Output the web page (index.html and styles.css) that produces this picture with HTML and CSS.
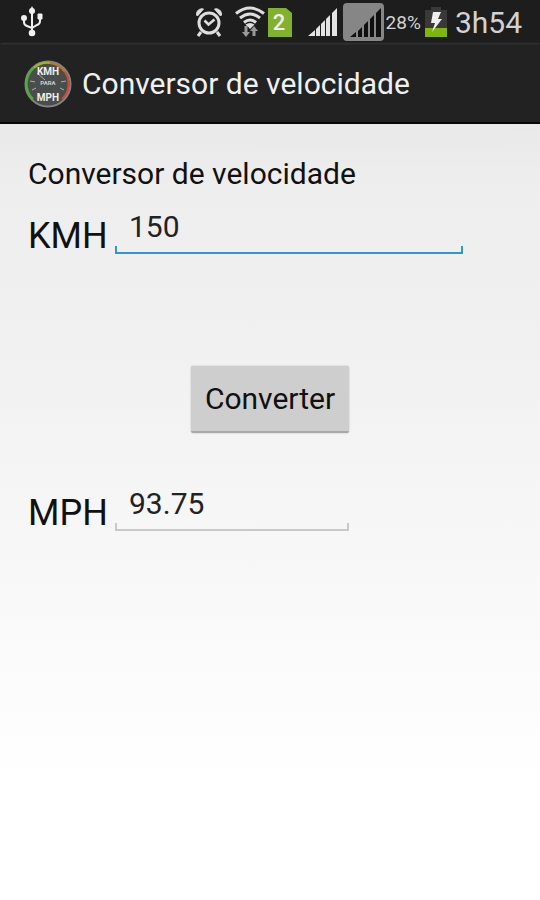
FILE: index.html
```html
<!DOCTYPE html>
<html lang="pt">
<head>
  <meta charset="UTF-8">
  <meta name="viewport" content="width=device-width, initial-scale=1.0">
  <title>Conversor de velocidade</title>
  <link rel="stylesheet" href="styles.css">
</head>
<body>
  <div class="status-bar">
    <svg class="usb" width="24" height="32" viewBox="0 0 24 32" fill="none" stroke="#f0f0f0" stroke-width="2">
      <path d="M12 5v22M4 11v5q0 3 3 4l5 2M20 10v5q0 3-3 4l-5 3"/>
      <path d="M12 0l3 6H9z" fill="#f0f0f0" stroke="none"/>
      <circle cx="12" cy="5" r="2" fill="#f0f0f0"/>
      <circle cx="4" cy="12" r="2" fill="#f0f0f0"/>
      <path d="M18 8h4v5h-4z" fill="#f0f0f0" stroke-width="1"/>
      <circle cx="12" cy="27" r="2.3" fill="#f0f0f0"/>
    </svg>
    <div class="status-icons">
      <svg width="30" height="30" viewBox="0 0 30 30" fill="none" stroke="#dedede">
        <circle cx="15" cy="16" r="10" stroke-width="3"/>
        <path d="M10.500 13.500l4 4 6-5" stroke-width="2.500"/>
        <path d="M2.500 8a5.500 5.500 0 0 1 7-6L3.500 9zM27.500 8a5.500 5.500 0 0 0-7-6l6 7z" fill="#dedede" stroke-width="1"/>
        <path d="M7 25l-3 4M23 25l3 4" stroke-width="3"/>
      </svg>
      <svg class="wifi" width="32" height="32" viewBox="0 0 32 32" fill="none" stroke="#dedede" stroke-width="3">
        <path d="M2 7.500q14-11 28 0M6 12q10-8 20 0M10 16.500q6-5 12 0"/>
        <path d="M11.500 18.500q4.500-3 9 0L16 23z" fill="#dedede" stroke="none"/>
        <path d="M12 21v7M20 31v-9" stroke="#1d1d1d" stroke-width="5"/>
        <path d="M12 20v7M20 30v-6" stroke="#999" stroke-width="3"/>
        <path d="M8 26h8l-4 5zM16 25h8l-4-5z" fill="#999" stroke="none"/>
      </svg>
      <svg width="24" height="29" viewBox="0 0 24 29">
        <path d="M0 0h18l6 5v24H0z" fill="#81b22f"/>
        <text class="sim-text" x="11" y="22" text-anchor="middle">2</text>
      </svg>
      <svg class="signal" width="30" height="28" viewBox="0 0 30 28" fill="#e4e4e4">
        <path d="M0 28l7-6v6zM8 21l4-4v11H8zM13 16l4-4v16h-4zM18 11l4-4v21h-4zM24 5l5-5v28h-5z"/>
      </svg>
      <svg class="signal-off" width="41" height="38" viewBox="0 0 41 38">
        <rect width="41" height="38" rx="4" fill="#868686"/>
        <path d="M7 34l6-5v5zM15 28l4-4v10h-4zM21 22l4-4v16h-4zM27 16l4-4v22h-4zM33 10l5-5v29h-5z" fill="#101010"/>
      </svg>
      <span class="battery-level">28%</span>
      <svg class="battery" width="22" height="30" viewBox="0 0 22 30">
        <path d="M6 0h10v3h6v27H0V3h6z" fill="#393939"/>
        <path d="M0 21h22v9H0z" fill="#80b50d"/>
        <path d="M8 5h8l-3 7h4L7 25l3-9H6z" fill="#eee"/>
      </svg>
      <span class="clock">3h54</span>
    </div>
  </div>

  <header class="action-bar">
    <svg width="48" height="50" viewBox="0 0 48 50">
      <circle cx="24" cy="25" r="22.500" fill="#4b4d4c" stroke="#858585" stroke-width="2"/>
      <g fill="none" stroke-width="2">
        <path d="M9 40A21 21 0 0 1 10 9" stroke="#41b52e"/>
        <path d="M10 9A21 21 0 0 1 26 4" stroke="#a3b51f"/>
        <path d="M26 4A21 21 0 0 1 41 13" stroke="#b8792b"/>
        <path d="M41 13A21 21 0 0 1 38 40" stroke="#d04a38"/>
      </g>
      <path d="M6 22l5 1M42 22l-5 1M8 31l4-2M40 31l-4-2M13 14l8 7" stroke="#aaa"/>
      <text class="gauge-text" x="24" y="16" text-anchor="middle">KMH</text>
      <text class="gauge-small" x="24" y="26" text-anchor="middle">PARA</text>
      <text class="gauge-text" x="24" y="42" text-anchor="middle">MPH</text>
    </svg>
    <h1>Conversor de velocidade</h1>
  </header>

  <form class="converter" id="converter">
    <p class="heading">Conversor de velocidade</p>
    <div class="field">
      <label for="kmh">KMH</label>
      <input class="active" type="text" inputmode="decimal" id="kmh" value="150">
    </div>
    <button type="submit">Converter</button>
    <div class="field">
      <label for="mph">MPH</label>
      <input class="result" type="text" id="mph" value="93.75" readonly>
    </div>
  </form>

  <script>
    document.getElementById('converter').addEventListener('submit', function(e) {
      e.preventDefault();
      const kmh = parseFloat(e.target.kmh.value);
      e.target.mph.value = isNaN(kmh) ? '' : kmh / 1.6;
    });
  </script>
</body>
</html>
```
FILE: styles.css
```css
* {
  box-sizing: border-box;
}
body {
  display: flex;
  flex-direction: column;
  min-height: 100vh;
  margin: 0;
  font-family: Roboto, sans-serif;
  font-size: 30px;
  color: #111;
  background-color: #fff;
}
.status-bar {
  display: flex;
  align-items: center;
  justify-content: space-between;
  height: 44px;
  padding: 0 18px 0 20px;
  background-color: #1d1d1d;
  color: #d2d2d2;
}
.status-icons {
  display: flex;
  align-items: center;
}
.wifi {
  margin: 0 2px 0 10px;
}
.signal {
  margin-left: 16px;
}
.signal-off {
  margin-left: 5px;
}
.battery-level {
  margin-left: 2px;
  font-size: 19px;
}
.battery {
  margin: 0 8px 0 4px;
}
.clock {
  font-size: 30px;
}
.sim-text {
  font-size: 22px;
  font-weight: 500;
  fill: #eee;
}
.action-bar {
  display: flex;
  align-items: center;
  gap: 10px;
  height: 80px;
  padding: 0 24px;
  background-color: #222;
  border-top: 1px solid #282828;
  border-bottom: 2px solid #080808;
  box-shadow: 0 1px 3px #888;
}
.action-bar h1 {
  margin: 0;
  font-size: 30px;
  font-weight: 400;
  color: #f0f0f0;
}
.gauge-text {
  font-size: 10px;
  font-weight: 700;
  fill: #eee;
}
.gauge-small {
  font-size: 6px;
  font-weight: 700;
  fill: #ccc;
}
.converter {
  display: flex;
  flex-direction: column;
  flex: 1;
  padding: 30px 28px;
  background: linear-gradient(#e9e9e9, #eee 8%, #f0f0f0 25%, #f6f6f6 50%, #fff 85%);
}
.heading {
  margin: 0;
  line-height: 40px;
}
.field {
  display: flex;
  align-items: flex-end;
  height: 60px;
}
.field label {
  flex: 0 0 87px;
  font-size: 36px;
  line-height: 36px;
}
.field input {
  --line: #c8c8c8;
  flex: 0 1 348px;
  min-width: 0;
  height: 56px;
  padding: 0 14px;
  border: none;
  outline: none;
  font: inherit;
  color: #222;
  background:
    linear-gradient(var(--line), var(--line)) bottom / 100% 2px no-repeat,
    linear-gradient(var(--line), var(--line)) left bottom / 2px 8px no-repeat,
    linear-gradient(var(--line), var(--line)) right bottom / 2px 8px no-repeat;
}
.field input.active {
  --line: #2f97c9;
}
.field input.result {
  flex-basis: 234px;
}
button {
  align-self: center;
  margin: 112px 0 38px;
  padding: 0 14px;
  height: 67px;
  font: inherit;
  color: #111;
  background-color: #cecece;
  border: none;
  border-bottom: 2px solid #a9a9a9;
  border-radius: 2px;
  box-shadow: 0 0 2px #bbb;
  cursor: pointer;
}
```
